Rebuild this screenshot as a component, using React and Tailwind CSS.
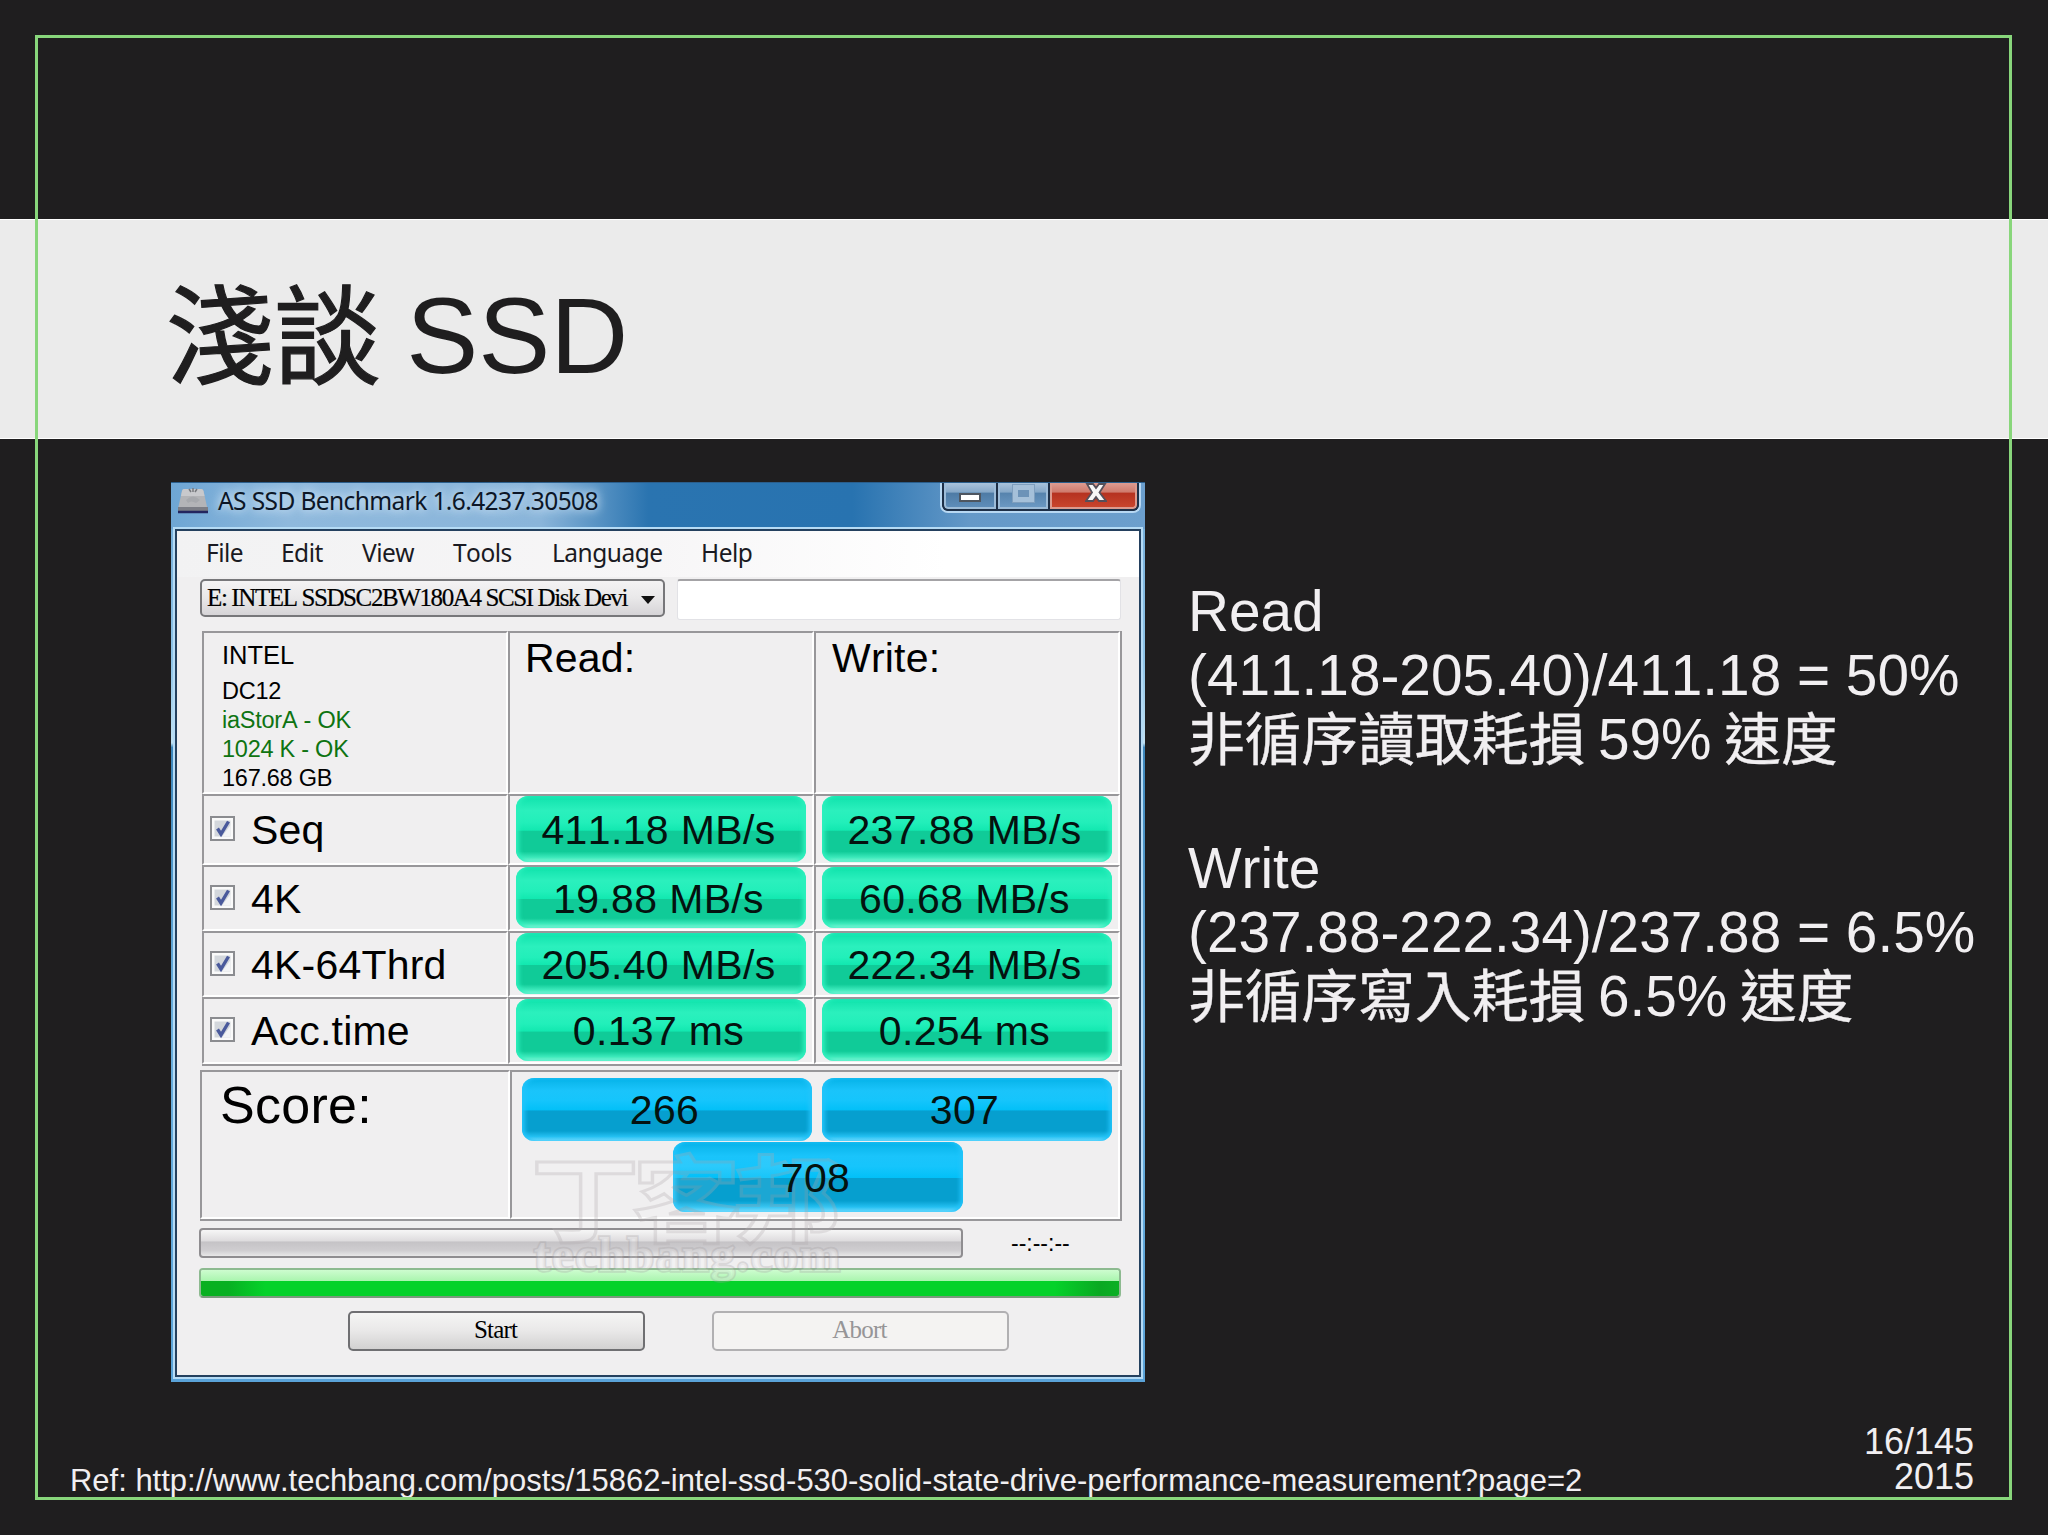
const MENU = [
  { label: 'File', width: 'w-[75px]' },
  { label: 'Edit', width: 'w-[81px]' },
  { label: 'View', width: 'w-[91px]' },
  { label: 'Tools', width: 'w-[99px]' },
  { label: 'Language', width: 'w-[149px]' },
  { label: 'Help', width: 'w-[60px]' },
]

const RESULTS = [
  { name: 'Seq', read: '411.18 MB/s', write: '237.88 MB/s', height: 'h-[71px]' },
  { name: '4K', read: '19.88 MB/s', write: '60.68 MB/s', height: 'h-[66px]' },
  { name: '4K-64Thrd', read: '205.40 MB/s', write: '222.34 MB/s', height: 'h-[66px]' },
  { name: 'Acc.time', read: '0.137 ms', write: '0.254 ms', height: 'h-[67px]' },
]

const NOTES = [
  { text: 'Read' },
  { text: '(411.18-205.40)/411.18 = 50%' },
  { cjk: '非循序讀取耗損', text: ' 59% ', tail: '速度' },
  { text: '' },
  { text: 'Write' },
  { text: '(237.88-222.34)/237.88 = 6.5%' },
  { cjk: '非循序寫入耗損', text: ' 6.5% ', tail: '速度' },
]

const SANS = "font-['Liberation_Sans','Noto_Sans_CJK_TC',sans-serif]"
const SERIF = "font-['Liberation_Serif',serif]"
const UI = "font-['Noto_Sans',sans-serif]"

function Cell({ className = '', children }) {
  return (
    <div className={`box-border border-t-2 border-l-2 border-t-[#98979a] border-l-[#98979a] border-r-2 border-b-2 border-r-white border-b-white ${className}`}>
      {children}
    </div>
  )
}

function Pill({ color, className = '', children }) {
  const tone =
    color === 'green'
      ? 'bg-[linear-gradient(180deg,#10e2ac_0%,#2bf0bd_22%,#22efba_40%,#12e8b0_52%,#10cb98_53%,#10cb98_84%,#3ce9bb_93%,#8ff7dc_100%)] shadow-[inset_4px_0_4px_-1px_#2cf0bd,inset_-4px_0_4px_-1px_#2cf0bd]'
      : 'bg-[linear-gradient(180deg,#06b2e8_0%,#1ac4fb_20%,#16c5fc_35%,#02c0f8_51%,#069fcf_52%,#069fcf_84%,#24c0f2_93%,#7fdfff_100%)] shadow-[inset_4px_0_4px_-1px_#22c4fa,inset_-4px_0_4px_-1px_#22c4fa]'
  return (
    <div className={`flex w-[290px] items-center justify-center rounded-[12px] pr-[5px] text-[41px] leading-[60px] tracking-[0.350px] whitespace-nowrap text-[#04120f] ${tone} ${className}`}>
      <span className="relative z-10">{children}</span>
    </div>
  )
}

function Checkbox() {
  return (
    <svg viewBox="0 0 25 25" className="mb-[2px] h-[25px] w-[25px] shrink-0">
      <rect x="1" y="1" width="23" height="23" fill="#fafafa" stroke="#8b8c90" strokeWidth="2" />
      <rect x="4.5" y="4.5" width="16" height="16" fill="#d3d7dc" />
      <path d="M12 20.5h8.500V9z" fill="#f3f4f6" />
      <path d="M7.500 12.500l3.500 5.500L18.500 5.500" fill="none" stroke="#4a5a9c" strokeWidth="3.400" />
    </svg>
  )
}

function DriveIcon() {
  return (
    <svg viewBox="0 0 32 28" className="h-[28px] w-[32px]">
      <path d="M7 2h17q2 0 2.500 2l4 18H1L5 4q.5-2 2-2z" fill="#b3b4b7" />
      <path d="M7 2h17q2 0 2.500 2l1 5H4L5 4q.5-2 2-2z" fill="#c8c9cc" />
      <path d="M1 20h30v5q0 1-1 1H2q-1 0-1-1z" fill="#7b7d85" />
      <path d="M1 25h30" stroke="#23255e" strokeWidth="2.500" />
      <path d="M12 2l2 3M16 1v4M20 2l-2 3" stroke="#77797d" strokeWidth="1.500" />
      <path d="M9 13q7-7 14 0l-4 3q-5-3-8 0z" fill="#a7a9ad" />
    </svg>
  )
}

function WindowButtons() {
  return (
    <div className="flex h-[30px] w-[201px] overflow-hidden rounded-b-[8px] border-2 border-t-0 border-[#b8d8f2] bg-[#1d2f47]">
      <div className="flex w-full gap-[2px] overflow-hidden rounded-b-[6px] border-2 border-t-0 border-[#1d2f47]">
        <div className="flex w-[52px] justify-center rounded-bl-[4px] border-2 border-t-0 border-[#9dbcd8] bg-[linear-gradient(180deg,#a9c3dc_0%,#86a8c8_38%,#4e7ba5_42%,#5e8db9_100%)] pt-[10px]">
          <div className="h-[9px] w-[22px] border-2 border-[#4e5660] bg-white" />
        </div>
        <div className="flex w-[50px] justify-center border-2 border-t-0 border-[#9dbcd8] bg-[linear-gradient(180deg,#a9c3dc_0%,#86a8c8_38%,#5683ad_42%,#6b98c2_100%)] pt-[2px]">
          <div className="h-[17px] w-[21px] border-[5px] border-[#a5c0d9] bg-[#6d93b8] outline outline-1 outline-[#7f9fbe]" />
        </div>
        <div className="flex flex-1 justify-center rounded-br-[4px] border-2 border-t-0 border-[#dc9a8e] bg-[linear-gradient(180deg,#dd9c92_0%,#cf7a6c_38%,#b53220_42%,#c9452d_100%)] pl-[4px]">
          <svg viewBox="0 0 22 20" className="h-[20px] w-[22px]">
            <path d="M2 1h6l3 4 3-4h6l-5.500 8.500L21 18h-7l-3-4-3 4H1l6-8.500z" fill="#f7f7f7" stroke="#56505a" strokeWidth="1.800" />
          </svg>
        </div>
      </div>
    </div>
  )
}

function Watermark() {
  return (
    <div className="pointer-events-none absolute top-[662px] left-[360px] w-[320px] opacity-30">
      <div className="h-[100px] origin-left scale-x-[1.15] text-[94px] leading-[100px] font-bold tracking-[-6px] whitespace-nowrap text-white/30 [-webkit-text-stroke:3px_#b3adb0] font-['Noto_Sans_CJK_TC',sans-serif]">
        丁客邦
      </div>
      <div className="-mt-[11px] ml-[3px] h-[44px] text-[48px] leading-[44px] font-bold tracking-[2px] whitespace-nowrap text-white/60 [-webkit-text-stroke:3.500px_#a5a1a4] [paint-order:stroke_fill] font-['Liberation_Serif',serif]">
        techbang.com
      </div>
    </div>
  )
}

function BenchmarkWindow() {
  return (
    <div className="relative h-[900px] w-[974px] shrink-0 bg-[linear-gradient(180deg,#6fa9d6_0%,#8fc4e8_20%,#bfe0f2_29%,#3c86bb_29.500%,#69aedd_60%,#5aa3d8_100%)] px-[4px] pb-[5px] text-black">
      {/* Title bar */}
      <div className="-mx-[4px] flex h-[47px] items-start justify-between border-t border-[#2a5e8c] bg-[linear-gradient(90deg,#6ea6d4_0%,#8fb9dd_12%,#8ab5da_38%,#2a74b0_49%,#2873b0_70%,#6599c8_82%,#6c9fcd_100%)] pr-[4px] pl-[6px]">
        <div className="flex items-start">
          <div className="pt-[4px]"><DriveIcon /></div>
          <div className={`ml-[9px] text-[24.500px] leading-[36px] tracking-[-0.600px] whitespace-nowrap text-[#0c1626] [text-shadow:0_0_12px_#cfe4f5,0_0_8px_#cfe4f5] ${UI}`}>
            AS SSD Benchmark 1.6.4237.30508
          </div>
        </div>
        <WindowButtons />
      </div>

      <div className="h-[848px] border-2 border-[#24405e] bg-[#f0eff0] shadow-[0_0_0_2px_#b5dbf5]">
        {/* Menu */}
        <div className={`flex h-[46px] bg-[linear-gradient(90deg,#f2f2f3_0%,#f7f6f7_50%,#ffffff_80%)] pl-[29px] text-[24.500px] leading-[44px] tracking-[-0.500px] text-[#1a1a22] ${UI}`}>
          {MENU.map(item => (
            <div key={item.label} className={`shrink-0 ${item.width}`}>{item.label}</div>
          ))}
        </div>

        {/* Drive picker */}
        <div className="mt-[2px] ml-[23px] flex h-[42px] items-start gap-[12px]">
          <div className="flex h-[38px] w-[465px] items-center justify-between rounded-[5px] border-2 border-[#77777a] bg-[linear-gradient(180deg,#f4f3f4_0%,#e9e8e9_50%,#d6d4d7_100%)] pr-[8px] pl-[5px]">
            <span className={`text-[25px] leading-[34px] tracking-[-1.390px] whitespace-nowrap [-webkit-text-stroke:0.200px_black] ${SERIF}`}>E: INTEL SSDSC2BW180A4 SCSI Disk Devi</span>
            <svg viewBox="0 0 14 8" className="mt-[3px] h-[8px] w-[14px] shrink-0"><path d="M0 0h14L7 8z" fill="#111" /></svg>
          </div>
          <div className="h-[41px] w-[444px] rounded-[3px] border border-t-2 border-[#e2e2e6] border-t-[#a4a3a6] bg-white" />
        </div>

        {/* Results */}
        <div className="mt-[10px] ml-[25px] w-[920px] border-r-2 border-b-2 border-[#98979a]">
          <div className="flex h-[163px]">
            <Cell className="w-[306px] pl-[18px] text-[23.500px] tracking-[-0.250px]">
              <div className="h-[41px] pt-[4px] text-[25.500px] leading-[36px] tracking-normal">INTEL</div>
              <div className="h-[31px] leading-[34px]">DC12</div>
              <div className="h-[29px] leading-[30px] text-[#0e7412]">iaStorA - OK</div>
              <div className="h-[29px] leading-[30px] text-[#0e7412]">1024 K - OK</div>
              <div className="h-[28px] leading-[30px]">167.68 GB</div>
            </Cell>
            <Cell className="w-[306px] pl-[15px] text-[41px] leading-[50px] tracking-[0.200px]">Read:</Cell>
            <Cell className="w-[306px] pl-[16px] text-[41px] leading-[50px] tracking-[0.200px]">Write:</Cell>
          </div>
          {RESULTS.map(row => (
            <div key={row.name} className={`flex ${row.height}`}>
              <Cell className="flex w-[306px] items-center pl-[6px]">
                <Checkbox />
                <span className="ml-[16px] pt-px text-[41px] leading-[60px] tracking-[0.200px] whitespace-nowrap">{row.name}</span>
              </Cell>
              <Cell className="flex w-[306px] pb-px pl-[6px]">
                <Pill color="green" className="pt-[2px]">{row.read}</Pill>
              </Cell>
              <Cell className="flex w-[306px] pb-px pl-[6px]">
                <Pill color="green" className="pt-[2px]">{row.write}</Pill>
              </Cell>
            </div>
          ))}
        </div>

        {/* Score */}
        <div className="mt-[4px] ml-[23px] flex h-[151px] w-[922px] border-r-2 border-b-2 border-[#98979a]">
          <Cell className="w-[310px] pl-[18px] text-[52px] leading-[67px] tracking-[0.300px]">Score:</Cell>
          <Cell className="flex-1 pt-[6px] pl-[10px]">
            <div className="flex gap-[10px]">
              <Pill color="blue" className="h-[63px] pt-px">266</Pill>
              <Pill color="blue" className="h-[63px] pt-px">307</Pill>
            </div>
            <Pill color="blue" className="mt-px ml-[151px] h-[70px] pt-[2px]">708</Pill>
          </Cell>
        </div>

        {/* Progress */}
        <div className="mt-[7px] ml-[22px] flex h-[30px] items-center">
          <div className="h-[30px] w-[764px] rounded-[4px] border-2 border-[#8f8d90] bg-[linear-gradient(180deg,#f6f6f6_0%,#dedcde_42%,#c5c3c6_46%,#cfcdd0_78%,#e8e7e8_100%)]" />
          <div className="ml-[48px] text-[23px] leading-[30px]">--:--:--</div>
        </div>
        <div className="mt-[10px] ml-[22px] h-[30px] w-[922px] overflow-hidden rounded-[4px] border-2 border-[#8dba90] border-b-[#7a9a7c]">
          <div className="h-[11px] bg-[linear-gradient(180deg,#cdfccf_0%,#a9f5ae_100%)]" />
          <div className="h-[15px] bg-[linear-gradient(90deg,#08b020_0%,#08b022_3%,#05d22a_7%,#05d22a_93%,#0aa822_98%,#0ab024_100%)]" />
        </div>

        <div className={`mt-[13px] ml-[171px] flex gap-[67px] text-center text-[25px] leading-[34px] tracking-[-0.800px] ${SERIF}`}>
          <div className="h-[40px] w-[297px] rounded-[5px] border-2 border-[#6f6f72] bg-[linear-gradient(180deg,#f5f5f4_0%,#e9e8e8_50%,#d2d1d1_100%)] pr-[2px]">Start</div>
          <div className="h-[40px] w-[297px] rounded-[5px] border-2 border-[#b1b0b2] bg-[#f4f3f2] pr-[2px] text-[#969597]">Abort</div>
        </div>
      </div>
      <Watermark />
    </div>
  )
}

export default function App() {
  return (
    <div className={`relative flex h-[1535px] w-[2048px] flex-col overflow-hidden bg-[#1f1e1f] text-[#f1eff1] [font-kerning:none] ${SANS}`}>
      {/* Title band */}
      <div className="mt-[219px] h-[220px] shrink-0 border-t border-b border-white bg-[#ebebeb] pt-[13px] pl-[166px] text-[108px] leading-[206px] [word-spacing:-0.054em] whitespace-nowrap text-[#1f1e1f]">
        <span className="relative top-[3px] [-webkit-text-stroke:1.200px_#1f1e1f]">淺談</span> SSD
      </div>

      <div className="mt-[43px] flex shrink-0 items-start pl-[171px]">
        <BenchmarkWindow />
        <div className="mt-[98px] ml-[43px] text-[56.760px] leading-[64.200px] whitespace-pre">
          {NOTES.map((line, i) => (
            <div key={i} className={`h-[64.200px] ${line.cjk ? '[word-spacing:-0.054em]' : ''}`}>
              {line.cjk && <span className="relative top-px [-webkit-text-stroke:0.400px_#f1eff1]">{line.cjk}</span>}
              {line.text}
              {line.tail && <span className="relative top-px [-webkit-text-stroke:0.400px_#f1eff1]">{line.tail}</span>}
            </div>
          ))}
        </div>
      </div>

      <div className="mt-[41px] flex shrink-0 items-start justify-between pr-[74px] pl-[70px] leading-[35px] whitespace-nowrap">
        <div className="mt-[40px] text-[30.970px]">
          Ref: http://www.techbang.com/posts/15862-intel-ssd-530-solid-state-drive-performance-measurement?page=2
        </div>
        <div className="pt-px text-right text-[36px]">
          <div>16/145</div>
          <div>2015</div>
        </div>
      </div>

      {/* Slide frame, runs over the band */}
      <div className="pointer-events-none absolute top-[35px] right-[36px] bottom-[35px] left-[35px] border-[3px] border-[#88d67b]" />
    </div>
  )
}
